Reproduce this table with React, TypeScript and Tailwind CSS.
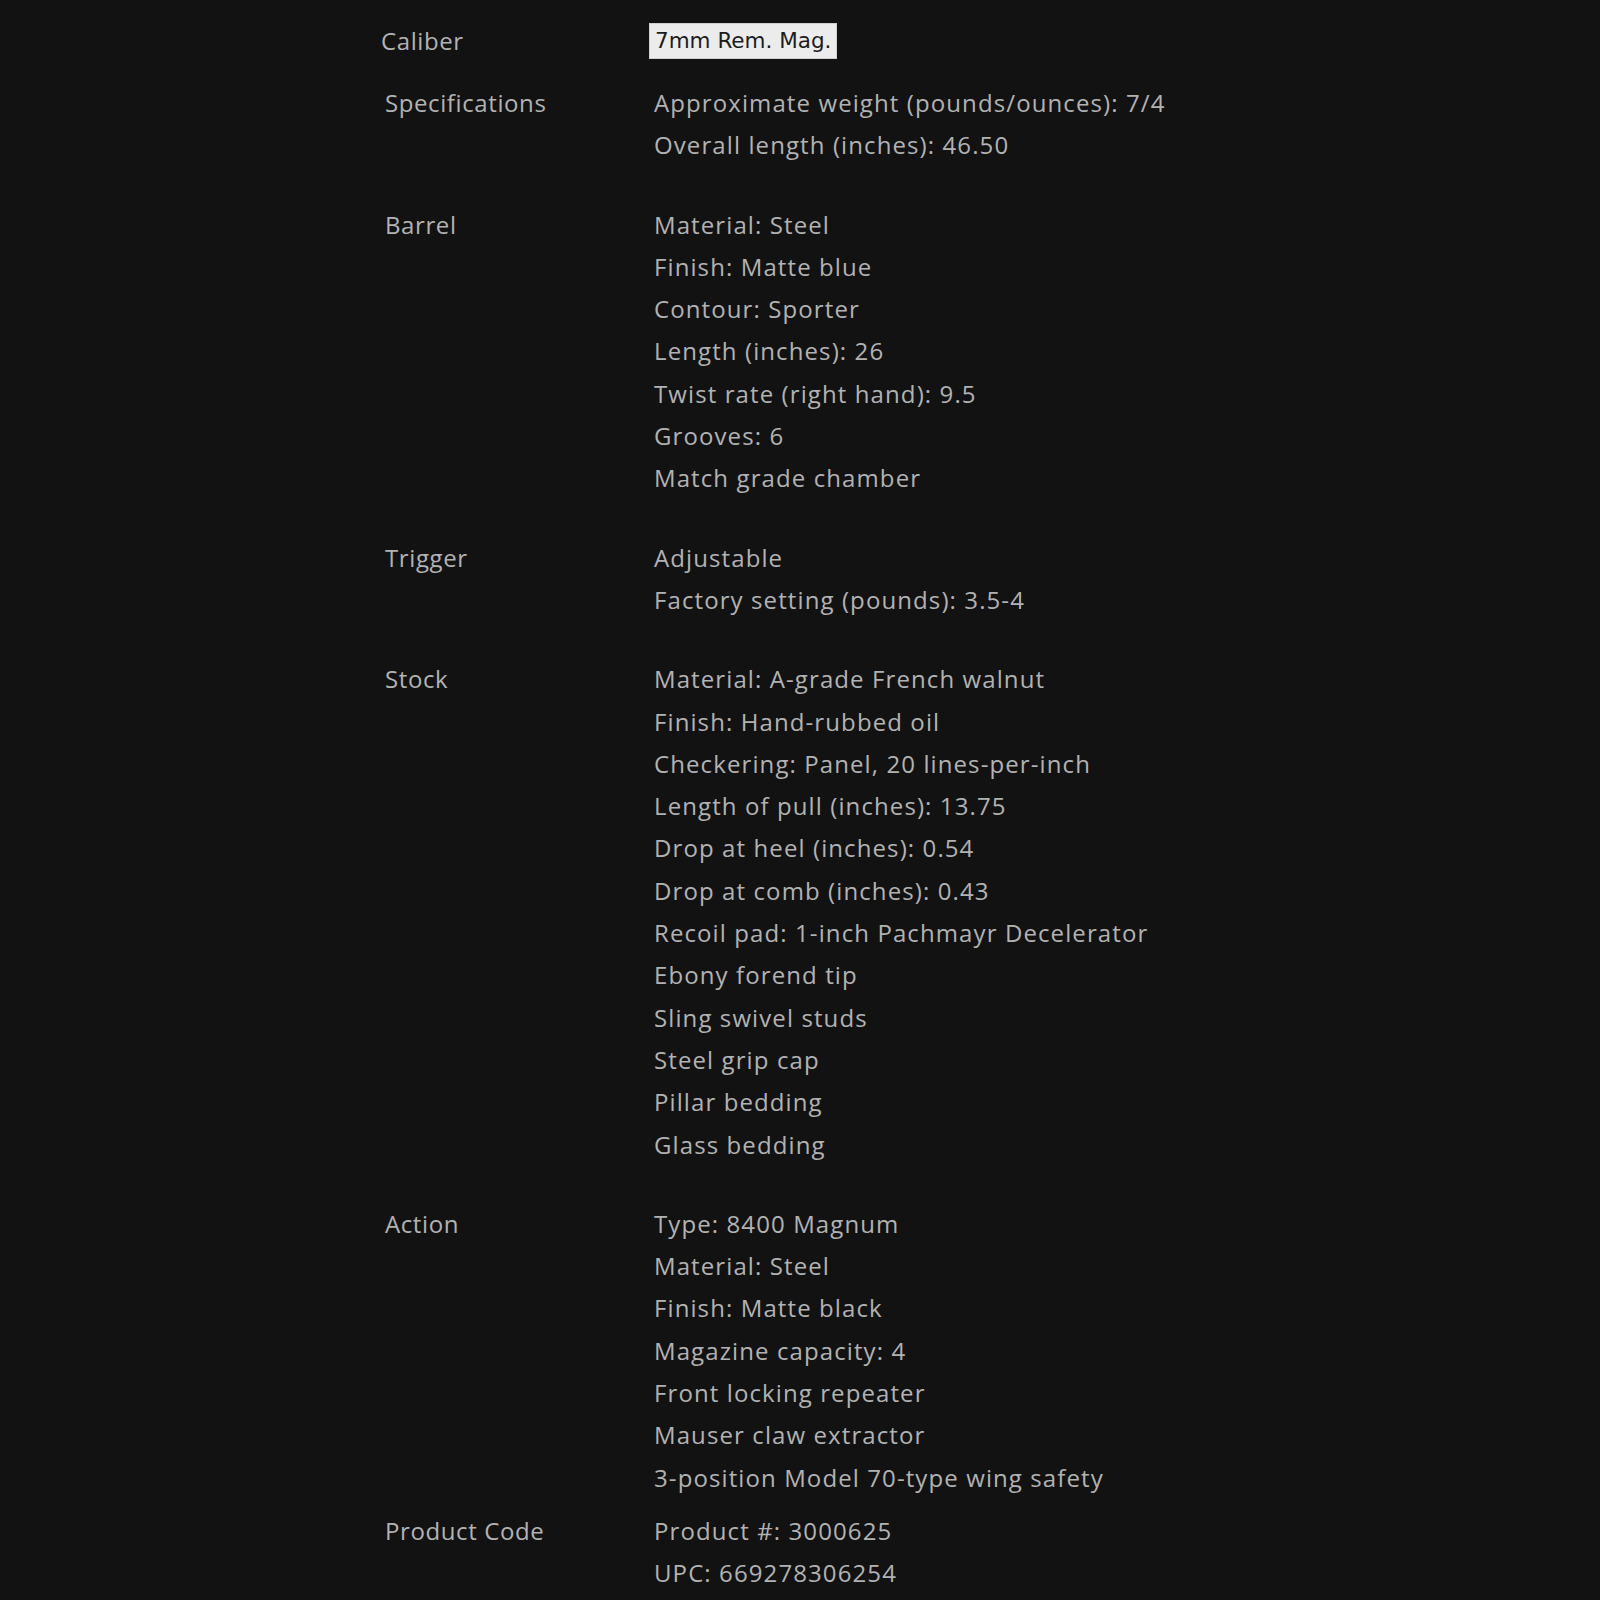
const sections: { label: string; lines: string[] }[] = [
  {
    label: 'Specifications',
    lines: ['Approximate weight (pounds/ounces): 7/4', 'Overall length (inches): 46.50'],
  },
  {
    label: 'Barrel',
    lines: [
      'Material: Steel',
      'Finish: Matte blue',
      'Contour: Sporter',
      'Length (inches): 26',
      'Twist rate (right hand): 9.5',
      'Grooves: 6',
      'Match grade chamber',
    ],
  },
  {
    label: 'Trigger',
    lines: ['Adjustable', 'Factory setting (pounds): 3.5-4'],
  },
  {
    label: 'Stock',
    lines: [
      'Material: A-grade French walnut',
      'Finish: Hand-rubbed oil',
      'Checkering: Panel, 20 lines-per-inch',
      'Length of pull (inches): 13.75',
      'Drop at heel (inches): 0.54',
      'Drop at comb (inches): 0.43',
      'Recoil pad: 1-inch Pachmayr Decelerator',
      'Ebony forend tip',
      'Sling swivel studs',
      'Steel grip cap',
      'Pillar bedding',
      'Glass bedding',
    ],
  },
  {
    label: 'Action',
    lines: [
      'Type: 8400 Magnum',
      'Material: Steel',
      'Finish: Matte black',
      'Magazine capacity: 4',
      'Front locking repeater',
      'Mauser claw extractor',
      '3-position Model 70-type wing safety',
    ],
  },
];

function SpecRow({ label, lines }: { label: string; lines: string[] }) {
  return (
    <div className="flex">
      <div className="w-[269px] shrink-0 tracking-[0.6px]">{label}</div>
      <div className="flex flex-col tracking-[1.1px]">
        {lines.map((line) => (
          <div key={line}>{line}</div>
        ))}
      </div>
    </div>
  );
}

export default function App() {
  return (
    <div
      className="min-h-[1600px] w-full bg-[#121212] pl-[385px] pt-[20px] text-[24px] leading-[42.3px] text-[#b2b2b2]"
      style={{ fontFamily: '"Open Sans", sans-serif' }}
    >
      {/* Caliber — highlighted value box */}
      <div className="-ml-[4px] flex h-[42px] items-center">
        <div className="w-[268px] shrink-0 tracking-[0.6px]">Caliber</div>
        <div className="flex h-[36px] items-center border border-[#d0d0d0] bg-[#ececec] px-[5px] font-['DejaVu_Sans',sans-serif] text-[21.5px] text-[#1c1c1c]">
          7mm Rem. Mag.
        </div>
      </div>

      <div className="mt-[20px] flex flex-col gap-[37px]">
        {sections.map((s) => (
          <SpecRow key={s.label} label={s.label} lines={s.lines} />
        ))}
      </div>

      <div className="mt-[11px]">
        <SpecRow label="Product Code" lines={['Product #: 3000625', 'UPC: 669278306254']} />
      </div>
    </div>
  );
}
